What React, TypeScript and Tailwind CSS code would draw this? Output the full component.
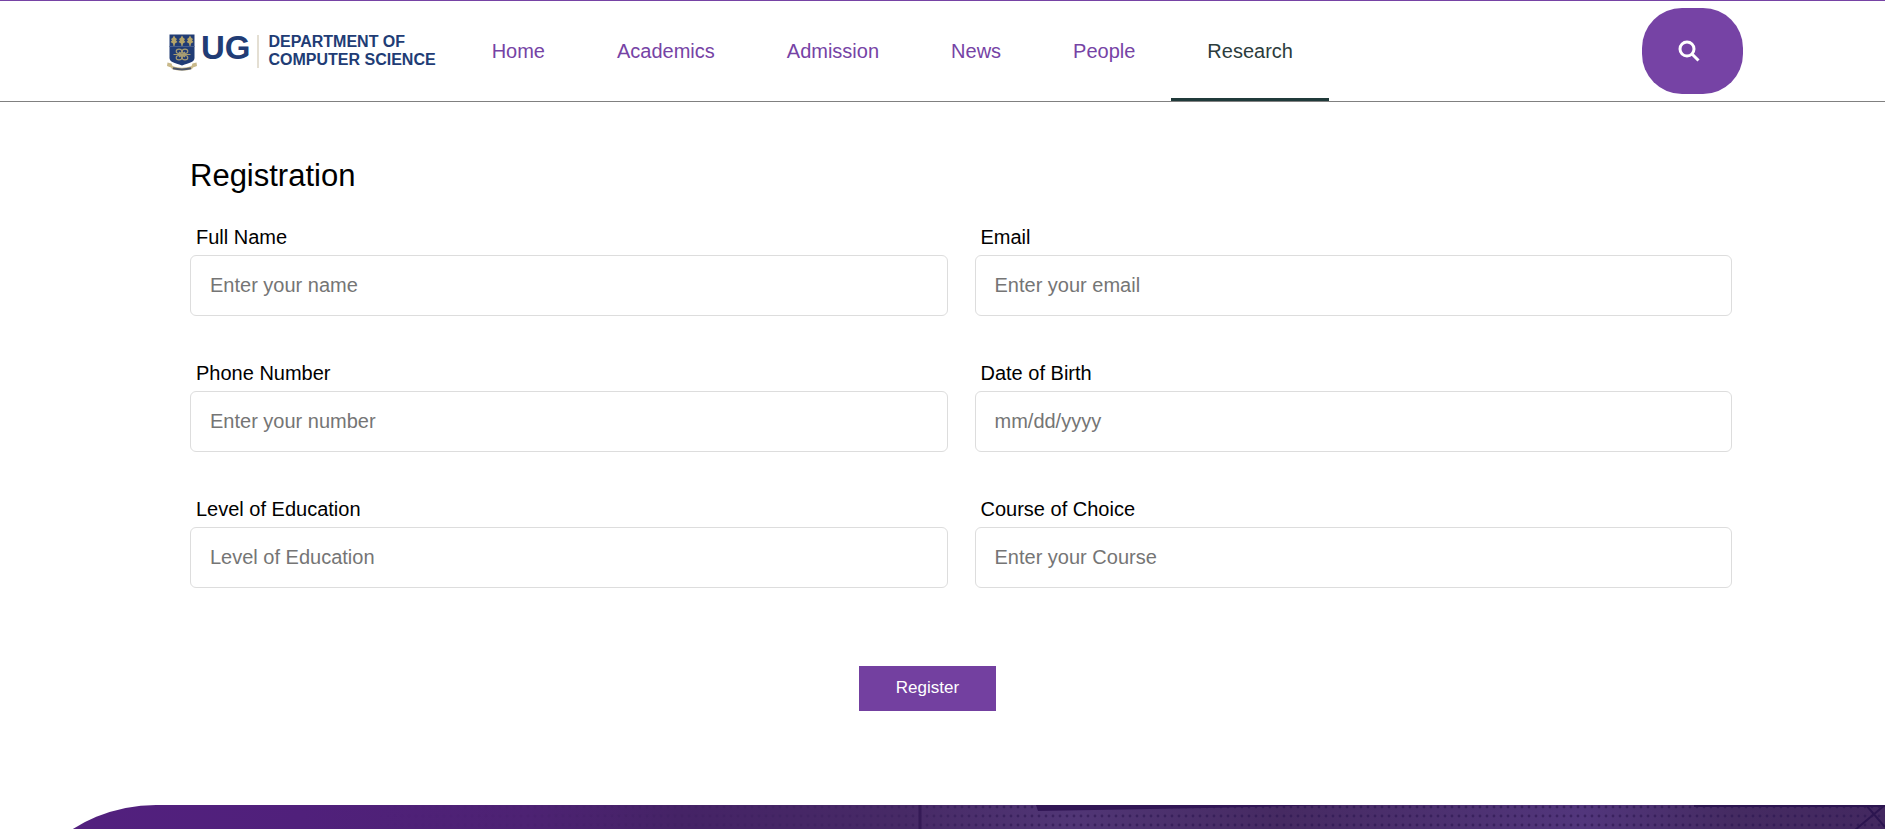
const navItems = ['Home', 'Academics', 'Admission', 'News', 'People', 'Research'];

const fields = [
  { id: 'name', label: 'Full Name', placeholder: 'Enter your name' },
  { id: 'email', label: 'Email', placeholder: 'Enter your email' },
  { id: 'phone', label: 'Phone Number', placeholder: 'Enter your number' },
  { id: 'dob', label: 'Date of Birth', placeholder: 'mm/dd/yyyy' },
  { id: 'level', label: 'Level of Education', placeholder: 'Level of Education' },
  { id: 'course', label: 'Course of Choice', placeholder: 'Enter your Course' },
];

function Crest() {
  return (
    <svg width="31" height="37" viewBox="0 0 31 37" className="mt-[2px]" aria-hidden="true">
      <path d="M2.500 .5h25v23.500c0 4-5 5-12.500 7.500C7.500 29 2.500 28 2.500 24z" fill="#213c75" />
      <path d="M2.500 12.500h25" stroke="#4a5f8e" strokeWidth="1" />
      <g fill="#b5a469">
        {[7, 15, 23].map((x) => (
          <path
            key={x}
            d={`M${x} 1.500l1.500 2.500 1.500 1-1 1.500 1.500 1.500-2.500 1.500-.5 2.500h-1l-.5-2.500-2.500-1.500 1.500-1.500-1-1.500 1.500-1z`}
          />
        ))}
      </g>
      <g fill="none" stroke="#a89d72" strokeWidth="1.100">
        <ellipse cx="12" cy="17.300" rx="2.800" ry="2.200" />
        <ellipse cx="18" cy="17.300" rx="2.800" ry="2.200" />
        <ellipse cx="12" cy="23.700" rx="2.800" ry="2.200" />
        <ellipse cx="18" cy="23.700" rx="2.800" ry="2.200" />
        <path d="M6.500 20.500h17M12 18l6 5M18 18l-6 5" />
      </g>
      <path
        d="M.5 28.500l4 1 1 2.500c6 2.300 13 2.300 19 0l1-2.500 4-1 .5 3.500-4 1.500-1 1.500c-6 2-14 2-20 0l-1-1.500-4-1.500z"
        fill="#c9b98a"
      />
      <path d="M6 34.300c6 1.500 12 1.500 18 0" fill="none" stroke="#4d5568" strokeWidth="2" />
    </svg>
  );
}

function Logo() {
  return (
    <a href="#" className="flex items-center text-[#213c75]" aria-label="UG Department of Computer Science">
      <Crest />
      <span className="ml-[3px] pb-[6px] text-[33px] leading-8 font-bold">UG</span>
      <span className="ml-[6px] h-[33px] w-[2px] bg-[#e4dfd3]" />
      <span className="ml-[10px] text-base leading-[18px] font-bold whitespace-nowrap">
        DEPARTMENT OF
        <br />
        COMPUTER SCIENCE
      </span>
    </a>
  );
}

function Banner() {
  return (
    <div className="h-[400px] overflow-hidden rounded-tl-[156px]">
      <svg width="100%" height="400" aria-hidden="true">
        <defs>
          <linearGradient id="shade">
            <stop offset="0" stopColor="#53207f" />
            <stop offset=".16" stopColor="#50207b" />
            <stop offset=".28" stopColor="#4d2273" />
            <stop offset=".36" stopColor="#452366" />
            <stop offset=".48" stopColor="#472a66" />
            <stop offset=".57" stopColor="#513676" />
            <stop offset=".68" stopColor="#462a62" />
            <stop offset=".84" stopColor="#52367c" />
            <stop offset=".92" stopColor="#452b62" />
            <stop offset="1" stopColor="#432860" />
          </linearGradient>
          <linearGradient id="fade">
            <stop offset=".2" stopColor="#fff" stopOpacity="0" />
            <stop offset=".46" stopColor="#fff" stopOpacity=".35" />
            <stop offset=".54" stopColor="#fff" />
          </linearGradient>
          <pattern id="dots" width="7" height="9" patternUnits="userSpaceOnUse">
            <circle cx="3" cy="2" r="1.400" fill="#2c1550" fillOpacity=".6" />
          </pattern>
          <mask id="reveal">
            <rect width="100%" height="400" fill="url(#fade)" />
          </mask>
        </defs>
        <rect width="100%" height="400" fill="url(#shade)" />
        <rect width="100%" height="400" fill="url(#dots)" mask="url(#reveal)" />
        <path d="M920 0v400" stroke="#351a56" strokeWidth="3" />
        <path d="M1036 0h300l-130 3-168 3z" fill="#311655" />
        <path d="M1695 0h190v1h-190zM1855 25l30-25M1866 0l19 22" fill="none" stroke="#2c1550" strokeWidth="2" />
      </svg>
    </div>
  );
}

export default function App() {
  return (
    <div className="flex h-screen flex-col overflow-hidden bg-white font-['Liberation_Sans',Arial,sans-serif] text-black">
      <header className="flex h-[102px] shrink-0 items-stretch border-t border-b border-t-[#7643a5] border-b-[#808080] pr-[142px] pl-[167px]">
        <Logo />
        <nav className="ml-5 flex text-xl">
          {navItems.map((item) => (
            <a
              key={item}
              href="#"
              className={
                item === 'Research'
                  ? 'flex items-center border-t-3 border-b-3 border-t-transparent border-b-[#203a3a] px-9 text-[#2c3c3c]'
                  : 'flex items-center px-9 text-[#7643a5]'
              }
            >
              {item}
            </a>
          ))}
        </nav>
        <button
          aria-label="Search"
          className="my-[7px] ml-auto flex w-[101px] items-center rounded-[40px] bg-[#7643a5] pl-9 text-white"
        >
          <svg width="22" height="22" viewBox="0 0 22 22" fill="none" stroke="currentColor" strokeWidth="3" aria-hidden="true">
            <circle cx="9" cy="9" r="7" />
            <path d="M14 14l6.500 6.500" />
          </svg>
        </button>
      </header>

      <main className="shrink-0 pt-14 pr-[153px] pb-[94px] pl-[190px]">
        <h1 className="text-[31px] leading-9">Registration</h1>
        <form className="mt-7" onSubmit={(e) => e.preventDefault()}>
          <div className="grid grid-cols-2 gap-x-[27px] gap-y-[42px]">
            {fields.map((f) => (
              <div key={f.id} className="flex flex-col">
                <label htmlFor={f.id} className="pb-[2px] pl-[6px] text-xl leading-[31px]">
                  {f.label}
                </label>
                <input
                  id={f.id}
                  type="text"
                  placeholder={f.placeholder}
                  className="h-[61px] w-full rounded-md border border-[#dddddd] px-[19px] text-xl placeholder:text-[#757575]"
                />
              </div>
            ))}
          </div>
          <div className="mt-[78px] flex justify-center pr-[67px]">
            <button type="submit" className="h-[45px] w-[137px] bg-[#7340a0] pb-[2px] text-[17px] text-white">
              Register
            </button>
          </div>
        </form>
      </main>

      <footer className="min-h-0 flex-1 overflow-hidden">
        <Banner />
      </footer>
    </div>
  );
}
